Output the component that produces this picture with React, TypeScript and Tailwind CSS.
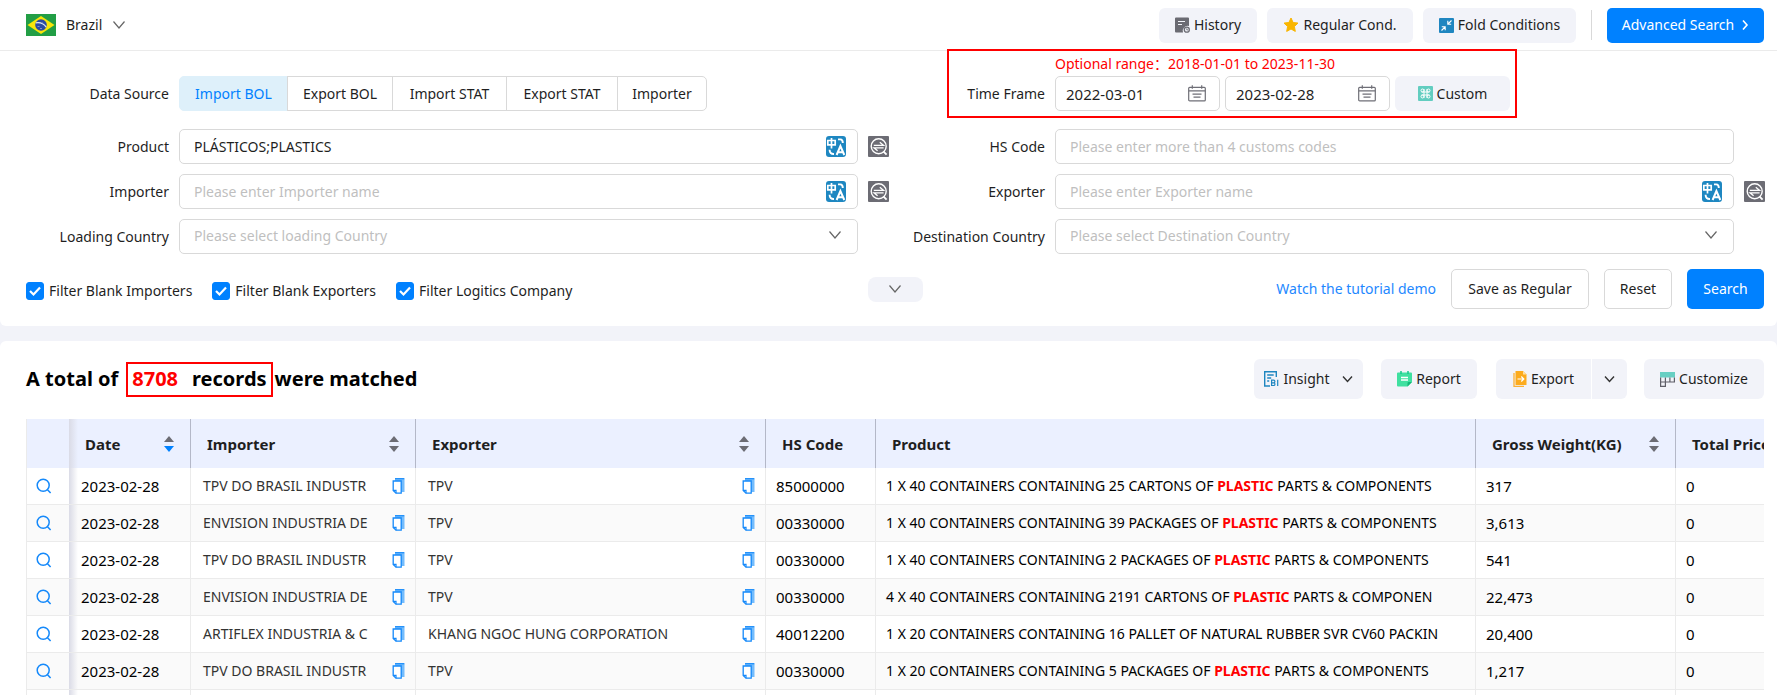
import { useState } from "react";
import type { ReactNode } from "react";

const SOURCES = [
  { name: "Import BOL", width: "w-[109px]" },
  { name: "Export BOL", width: "w-[106px]" },
  { name: "Import STAT", width: "w-[115px]" },
  { name: "Export STAT", width: "w-[112px]" },
  { name: "Importer", width: "w-[90px]" },
];

const FILTERS = ["Filter Blank Importers", "Filter Blank Exporters", "Filter Logitics Company"];

const ROWS = [
  { date: "2023-02-28", importer: "TPV DO BRASIL INDUSTR", exporter: "TPV", hs: "85000000", product: "1 X 40 CONTAINERS CONTAINING 25 CARTONS OF PLASTIC PARTS & COMPONENTS", weight: "317", price: "0" },
  { date: "2023-02-28", importer: "ENVISION INDUSTRIA DE", exporter: "TPV", hs: "00330000", product: "1 X 40 CONTAINERS CONTAINING 39 PACKAGES OF PLASTIC PARTS & COMPONENTS", weight: "3,613", price: "0" },
  { date: "2023-02-28", importer: "TPV DO BRASIL INDUSTR", exporter: "TPV", hs: "00330000", product: "1 X 40 CONTAINERS CONTAINING 2 PACKAGES OF PLASTIC PARTS & COMPONENTS", weight: "541", price: "0" },
  { date: "2023-02-28", importer: "ENVISION INDUSTRIA DE", exporter: "TPV", hs: "00330000", product: "4 X 40 CONTAINERS CONTAINING 2191 CARTONS OF PLASTIC PARTS & COMPONEN", weight: "22,473", price: "0" },
  { date: "2023-02-28", importer: "ARTIFLEX INDUSTRIA & C", exporter: "KHANG NGOC HUNG CORPORATION", hs: "40012200", product: "1 X 20 CONTAINERS CONTAINING 16 PALLET OF NATURAL RUBBER SVR CV60 PACKIN", weight: "20,400", price: "0" },
  { date: "2023-02-28", importer: "TPV DO BRASIL INDUSTR", exporter: "TPV", hs: "00330000", product: "1 X 20 CONTAINERS CONTAINING 5 PACKAGES OF PLASTIC PARTS & COMPONENTS", weight: "1,217", price: "0" },
];

const inputClass =
  "block h-[35px] w-full rounded-[5px] border border-[#d9d9d9] bg-white px-[14px] text-[#1f1f1f] outline-none placeholder:text-[#bfbfbf] focus:border-[#0081ff]";
const softButton = "flex items-center justify-center gap-1 rounded-md bg-[#f2f3f9] hover:bg-[#e8eaf3]";
const pinnedShadow = "bg-linear-to-r from-[#dadbe6] to-transparent to-[9px]";

/* ---------- icons ---------- */

function Flag() {
  return (
    <svg width="30" height="22" viewBox="0 0 30 22" aria-hidden="true">
      <rect width="30" height="22" fill="#229e45" />
      <path d="M15 2l13.500 9L15 20 1.500 11z" fill="#f8e509" />
      <circle cx="15" cy="11" r="5.800" fill="#2b49a3" />
      <path d="M9.800 8.800c4-.6 8 .8 10.400 4.300" stroke="#dfe6f2" strokeWidth="1.200" fill="none" />
      <path d="M11.500 12.500h2M14 14.500h2M16 9h1" stroke="#8fa3d6" strokeWidth=".8" />
    </svg>
  );
}

function Chevron() {
  return (
    <svg width="14" height="10" viewBox="0 0 14 10" fill="none" aria-hidden="true">
      <path d="M1.500 1.500L7 8l5.500-6.500" stroke="#666" strokeWidth="1.200" />
    </svg>
  );
}

function SmallChevron() {
  return (
    <svg width="11" height="8" viewBox="0 0 11 8" fill="none" aria-hidden="true">
      <path d="M1 1.500L5.500 6.500 10 1.500" stroke="#333" strokeWidth="1.400" />
    </svg>
  );
}

function HistoryIcon() {
  return (
    <svg width="15" height="16" viewBox="0 0 15 16" aria-hidden="true">
      <path d="M0 1.500A1 1 0 011 .5h12a1 1 0 011 1V9a5 5 0 00-6 6.500H1a1 1 0 01-1-1z" fill="#6b6b73" />
      <path d="M3 4.500h7M3 7.500h4" stroke="#f2f3f9" strokeWidth="1.200" />
      <circle cx="11.800" cy="12.700" r="2.500" fill="#f2f3f9" stroke="#6b6b73" strokeWidth="1.300" />
      <path d="M11.800 11.300v1.600H13" stroke="#6b6b73" strokeWidth=".9" fill="none" />
    </svg>
  );
}

function StarIcon() {
  return (
    <svg width="16" height="16" viewBox="0 0 16 16" aria-hidden="true">
      <path
        d="M8 1l2.100 4.500 4.900.6-3.600 3.400.9 4.900L8 12l-4.300 2.400.9-4.900L1 6.100l4.900-.6z"
        fill="#f9b500"
        stroke="#f9b500"
        strokeWidth="1"
        strokeLinejoin="round"
      />
    </svg>
  );
}

function FoldIcon() {
  return (
    <svg width="15" height="15" viewBox="0 0 15 15" fill="none" aria-hidden="true">
      <rect width="15" height="15" rx="1" fill="#1f86c0" />
      <path d="M12.500 2.500L9 6M8.800 2.800V6.200h3.400M2.500 12.500L6 9M2.800 8.800h3.400v3.400" stroke="#fff" strokeWidth="1.100" />
    </svg>
  );
}

function TranslateIcon() {
  return (
    <svg width="20" height="21" viewBox="0 0 20 21" fill="none" aria-hidden="true">
      <rect width="20" height="21" rx="3" fill="#1e87c1" />
      <g stroke="#fff">
        <path d="M1.800 4.500h7.400v4.300H1.800zM5.500 2v10.500" strokeWidth="1.700" />
        <path d="M10.600 19L14.400 10l3.900 9M12 16.200h4.900" strokeWidth="2" />
        <path d="M12 3.400h2.300q2.500 0 2.500 3.600M3.600 13.800q0 4.400 4.400 4.200" strokeWidth="1.900" />
      </g>
    </svg>
  );
}

function FuzzyIcon() {
  return (
    <svg width="21" height="21" viewBox="0 0 21 21" fill="none" aria-hidden="true">
      <rect width="21" height="21" rx="1" fill="#6c6c74" />
      <circle cx="10.700" cy="10.300" r="7.500" stroke="#fff" strokeWidth="1.400" />
      <path d="M15.600 15.600l3 3" stroke="#fff" strokeWidth="1.800" />
      <path d="M5.800 9.300h9.700L11.800 6.300M15.600 11.800H6l3.600 3" stroke="#fff" strokeWidth="1.300" />
    </svg>
  );
}

function CalendarIcon() {
  return (
    <svg width="18" height="17" viewBox="0 0 18 17" fill="none" stroke="#6f6f77" aria-hidden="true">
      <rect x=".7" y="2.300" width="16.600" height="13.600" rx="1" strokeWidth="1.200" />
      <path d="M.7 5.800h16.600M4.300.3v3.500M13.700.3v3.500" strokeWidth="1.200" />
      <path d="M4.500 9.200h9M5.500 12.200h7" strokeWidth="1.300" />
    </svg>
  );
}

function CommandIcon() {
  return (
    <svg width="15" height="15" viewBox="0 0 15 15" fill="none" aria-hidden="true">
      <rect width="15" height="15" rx="1" fill="#62cdc0" />
      <g stroke="#fff" strokeWidth="1">
        <path d="M6 3v9M9 3v9M3.500 6h8M3.500 9h8" />
        <circle cx="4.500" cy="4.500" r="1.500" />
        <circle cx="10.500" cy="4.500" r="1.500" />
        <circle cx="4.500" cy="10.500" r="1.500" />
        <circle cx="10.500" cy="10.500" r="1.500" />
      </g>
    </svg>
  );
}

function InsightIcon() {
  return (
    <svg width="15" height="16" viewBox="0 0 15 16" fill="none" stroke="#1f86c0" aria-hidden="true">
      <path d="M6 15H.7V.7h11.600V6" strokeWidth="1.400" />
      <path d="M3.200 4h6.500M3.200 7h4M3.200 10h2" strokeWidth="1.300" />
      <path d="M7.600 9.200v5.300h2a1.300 1.300 0 000-2.700 1.300 1.300 0 000-2.600zM7.600 11.800h2M13.700 8.700V15" strokeWidth="1.200" />
    </svg>
  );
}

function ReportIcon() {
  return (
    <svg width="15" height="16" viewBox="0 0 15 16" aria-hidden="true">
      <path d="M1 1.500h13a1 1 0 011 1V11l-4.500 4.500H1a1 1 0 01-1-1v-12a1 1 0 011-1z" fill="#3fe0a0" />
      <path d="M15 11l-4.500 4.500V12a1 1 0 011-1z" fill="#12b877" />
      <path d="M4 0v3M11 0v3" stroke="#12c98a" strokeWidth="1.500" />
      <path d="M4 6.500h7M4 9h7" stroke="#fff" strokeWidth="1.300" />
    </svg>
  );
}

function ExportIcon() {
  return (
    <svg width="14" height="16" viewBox="0 0 14 16" fill="none" aria-hidden="true">
      <path d="M1 2v13.300h10" stroke="#fbb034" strokeWidth="1.300" />
      <path d="M2.500 0H10l3.500 3.500V14h-11z" fill="#fcab1e" />
      <path d="M10 0l3.500 3.500H10z" fill="#ffe0a3" />
      <path d="M4.500 8h6M8.300 5.500L10.800 8l-2.500 2.500" stroke="#fff" strokeWidth="1.200" />
    </svg>
  );
}

function CustomizeIcon() {
  return (
    <svg width="15" height="15" viewBox="0 0 15 15" fill="none" aria-hidden="true">
      <rect width="15" height="5.500" fill="#67cfc3" />
      <path d="M.6 5.500v8.900h4.800V5.500M.6 10h13.800V5.500M9.900 5.500V10" stroke="#5f5f68" strokeWidth="1.200" />
    </svg>
  );
}

function SearchIcon() {
  return (
    <svg width="16" height="16" viewBox="0 0 16 16" fill="none" stroke="#1589fa" strokeWidth="1.500" aria-hidden="true">
      <circle cx="7.200" cy="7.200" r="6" />
      <path d="M11.300 11.600l3.300 3.400" />
    </svg>
  );
}

function CopyIcon() {
  return (
    <svg width="13" height="16" viewBox="0 0 13 16" fill="none" aria-hidden="true">
      <path d="M3 .5h9.500V14H9V4H3z" fill="#74bcfc" />
      <path d="M3 .7h9.300" stroke="#1589fa" strokeWidth="1.200" />
      <path d="M1.200 3h8v12.200H4L1.200 12.500z" stroke="#1589fa" strokeWidth="1.300" fill="#fff" />
      <path d="M1.200 12.300H4v2.900" stroke="#1589fa" strokeWidth="1.200" />
    </svg>
  );
}

function SortIcon({ desc = false }: { desc?: boolean }) {
  return (
    <svg width="10" height="16" viewBox="0 0 10 16" aria-hidden="true">
      <path d="M5 0l5 6H0z" fill="#6c6c74" />
      <path d="M5 16l5-6H0z" fill={desc ? "#0081ff" : "#6c6c74"} />
    </svg>
  );
}

/* ---------- form pieces ---------- */

function Field({ label, id, action, children }: { label: string; id: string; action?: ReactNode; children: ReactNode }) {
  return (
    <div className="flex items-center gap-[10px]">
      <label htmlFor={id} className="w-[156px] shrink-0 text-right">
        {label}
      </label>
      <div className="relative min-w-0 flex-1">{children}</div>
      <div className="w-[21px] shrink-0">{action}</div>
    </div>
  );
}

function FuzzyButton() {
  return (
    <button className="block" aria-label="Fuzzy search">
      <FuzzyIcon />
    </button>
  );
}

function TextField({ label, id, value, placeholder, translate = false }: { label: string; id: string; value?: string; placeholder?: string; translate?: boolean }) {
  return (
    <Field label={label} id={id} action={translate && <FuzzyButton />}>
      <input id={id} type="text" defaultValue={value} placeholder={placeholder} className={inputClass} />
      {translate && (
        <button className="absolute top-[7px] right-3" aria-label="Translate">
          <TranslateIcon />
        </button>
      )}
    </Field>
  );
}

function SelectField({ label, id, placeholder }: { label: string; id: string; placeholder: string }) {
  return (
    <Field label={label} id={id}>
      <select
        id={id}
        defaultValue=""
        className="block h-[35px] w-full appearance-none rounded-[5px] border border-[#d9d9d9] bg-white px-[14px] pb-[2px] text-[#bfbfbf] outline-none"
      >
        <option value="">{placeholder}</option>
      </select>
      <span className="pointer-events-none absolute top-[11px] right-4">
        <Chevron />
      </span>
    </Field>
  );
}

function DateInput({ id, label, value }: { id: string; label: string; value: string }) {
  return (
    <div className="relative w-[165px]">
      <input
        id={id}
        aria-label={label}
        type="text"
        defaultValue={value}
        className="block h-[35px] w-full rounded-[5px] border border-[#d9d9d9] bg-white px-[10px] text-[15px] text-[#1f1f1f] outline-none"
      />
      <span className="pointer-events-none absolute top-[9px] right-[14px]">
        <CalendarIcon />
      </span>
    </div>
  );
}

/* ---------- table ---------- */

function Product({ text }: { text: string }) {
  return (
    <>
      {text.split(/(PLASTIC)/).map((part, i) =>
        part === "PLASTIC" ? (
          <b key={i} className="text-[#ff0000]">
            {part}
          </b>
        ) : (
          part
        )
      )}
    </>
  );
}

function Th({ children, sort, className = "" }: { children: ReactNode; sort?: "none" | "desc"; className?: string }) {
  return (
    <th className={`border-r border-[#b4b8c8] px-4 text-left text-[15px] font-bold ${className}`}>
      <div className="flex items-center justify-between">
        <span className="whitespace-nowrap">{children}</span>
        {sort && (
          <button aria-label="Sort">
            <SortIcon desc={sort === "desc"} />
          </button>
        )}
      </div>
    </th>
  );
}

function Td({ children, className = "pl-[10px] text-[15px]" }: { children?: ReactNode; className?: string }) {
  return <td className={`overflow-hidden border-r border-b border-[#ebebeb] whitespace-nowrap ${className}`}>{children}</td>;
}

function CompanyTd({ name }: { name?: string }) {
  return (
    <Td className="pr-[10px] pl-3 text-[#333]">
      {name && (
        <div className="flex items-center justify-between">
          {name}
          <button aria-label={`Copy ${name}`}>
            <CopyIcon />
          </button>
        </div>
      )}
    </Td>
  );
}

function ResultTable() {
  return (
    <table className="w-[1850px] table-fixed border-separate border-spacing-0 border-l border-[#ebebeb] text-black">
      <colgroup>
        <col className="w-[42px]" />
        <col className="w-[122px]" />
        <col className="w-[225px]" />
        <col className="w-[350px]" />
        <col className="w-[110px]" />
        <col className="w-[600px]" />
        <col className="w-[200px]" />
        <col className="w-[200px]" />
      </colgroup>
      <thead>
        <tr className="h-[49px] bg-[#ebf0ff] text-[#1f1f1f]">
          <th />
          <Th sort="desc" className={pinnedShadow}>
            Date
          </Th>
          <Th sort="none">Importer</Th>
          <Th sort="none">Exporter</Th>
          <Th>HS Code</Th>
          <Th>Product</Th>
          <Th sort="none">Gross Weight(KG)</Th>
          <Th>Total Price</Th>
        </tr>
      </thead>
      <tbody>
        {ROWS.map((row, i) => (
          <tr key={i} className="h-[37px] bg-white even:bg-[#fafafa]">
            <td className="border-b border-[#ebebeb] pl-[9px]">
              <button className="block" aria-label="View record">
                <SearchIcon />
              </button>
            </td>
            <Td className={`pl-3 text-[15px] ${pinnedShadow}`}>{row.date}</Td>
            <CompanyTd name={row.importer} />
            <CompanyTd name={row.exporter} />
            <Td>{row.hs}</Td>
            <Td className="pl-[10px]">
              <Product text={row.product} />
            </Td>
            <Td>{row.weight}</Td>
            <Td>{row.price}</Td>
          </tr>
        ))}
        {/* next row, still loading */}
        <tr className="h-[37px] bg-white">
          <td />
          <Td className={pinnedShadow} />
          <CompanyTd />
          <CompanyTd />
          <Td />
          <Td />
          <Td />
          <Td />
        </tr>
      </tbody>
    </table>
  );
}

export default function App() {
  const [source, setSource] = useState("Import BOL");
  const [checked, setChecked] = useState<string[]>(FILTERS);

  const toggle = (name: string) =>
    setChecked((list) => (list.includes(name) ? list.filter((n) => n !== name) : [...list, name]));

  return (
    <div className="flex h-screen flex-col overflow-hidden bg-[#f2f3f9] font-['Noto_Sans','Noto_Sans_CJK_SC',sans-serif] text-[14px] leading-5 text-[#1f1f1f]">
      <header className="flex h-[51px] shrink-0 items-center justify-between border-b border-[#ebebeb] bg-white pr-[13px] pl-[26px]">
        <button className="flex items-center gap-[10px]">
          <Flag />
          Brazil
          <Chevron />
        </button>
        <div className="flex items-center gap-[10px]">
          <button className={`${softButton} h-[35px] w-[98px]`}>
            <HistoryIcon />
            History
          </button>
          <button className={`${softButton} h-[35px] w-[146px]`}>
            <StarIcon />
            Regular Cond.
          </button>
          <button className={`${softButton} h-[35px] w-[153px]`}>
            <FoldIcon />
            Fold Conditions
          </button>
          <div className="mx-[5px] h-[30px] w-px bg-[#d9d9d9]" />
          <button className="flex h-[35px] w-[157px] items-center justify-center gap-2 rounded-[5px] bg-[#0081ff] text-white">
            Advanced Search
            <svg width="7" height="10" viewBox="0 0 7 10" fill="none" aria-hidden="true">
              <path d="M1 .5L5 5 1 9.500" stroke="#fff" strokeWidth="1.600" />
            </svg>
          </button>
        </div>
      </header>

      <section className="shrink-0 rounded-b-md bg-white pb-[17px]">
        <div className="grid grid-cols-2 gap-y-[10px] pt-[25px] pr-3 pl-[13px]">
          <div className="mb-2 flex items-center gap-[10px]">
            <span id="source-label" className="w-[156px] text-right">
              Data Source
            </span>
            <div role="group" aria-labelledby="source-label" className="flex">
              {SOURCES.map(({ name, width }) => (
                <button
                  key={name}
                  onClick={() => setSource(name)}
                  className={`-ml-px h-[35px] border first:ml-0 first:rounded-l-[5px] last:rounded-r-[5px] ${width} ${
                    source === name ? "border-[#def0fa] bg-[#def0fa] text-[#0081ff]" : "border-[#d9d9d9] bg-white"
                  }`}
                >
                  {name}
                </button>
              ))}
            </div>
          </div>
          <div className="relative mb-2 flex items-center gap-[10px]">
            <div className="pointer-events-none absolute -top-[27px] left-[58px] h-[69px] w-[570px] border-2 border-[#ff0000]" />
            <p className="absolute -top-[22px] left-[166px] text-[#ff0000]">Optional range：2018-01-01 to 2023-11-30</p>
            <label htmlFor="date-from" className="w-[156px] text-right">
              Time Frame
            </label>
            <div className="flex gap-[5px]">
              <DateInput id="date-from" label="Time Frame from" value="2022-03-01" />
              <DateInput id="date-to" label="Time Frame to" value="2023-02-28" />
              <button className={`${softButton} h-[35px] w-[115px]`}>
                <CommandIcon />
                Custom
              </button>
            </div>
          </div>

          <TextField label="Product" id="product" value="PLÁSTICOS;PLASTICS" translate />
          <TextField label="HS Code" id="hs-code" placeholder="Please enter more than 4 customs codes" />
          <TextField label="Importer" id="importer" placeholder="Please enter Importer name" translate />
          <TextField label="Exporter" id="exporter" placeholder="Please enter Exporter name" translate />
          <SelectField label="Loading Country" id="loading" placeholder="Please select loading Country" />
          <SelectField label="Destination Country" id="destination" placeholder="Please select Destination Country" />
        </div>

        <div className="mt-[15px] grid grid-cols-[1fr_auto_1fr] items-center pr-[13px] pl-[26px]">
          <div className="flex gap-5 pt-1">
            {FILTERS.map((name) => (
              <label key={name} className="flex items-center gap-[5px]">
                <span className="relative size-[18px]">
                  <input
                    type="checkbox"
                    checked={checked.includes(name)}
                    onChange={() => toggle(name)}
                    className="block size-[18px] appearance-none rounded-[3px] border border-[#d9d9d9] checked:border-[#0081ff] checked:bg-[#0081ff]"
                  />
                  <svg className="pointer-events-none absolute inset-0" width="18" height="18" viewBox="0 0 18 18" fill="none" aria-hidden="true">
                    <path d="M4 9l3.500 3.500L14 5.500" stroke="#fff" strokeWidth="2.200" />
                  </svg>
                </span>
                {name}
              </label>
            ))}
          </div>
          <button className="flex h-[25px] w-[55px] items-center justify-center rounded-lg bg-[#f2f3f9]" aria-label="More conditions">
            <Chevron />
          </button>
          <div className="flex items-center justify-end gap-[15px]">
            <a href="#tutorial" className="text-[#1e88ff]">
              Watch the tutorial demo
            </a>
            <button className="h-10 w-[138px] rounded-[5px] border border-[#d9d9d9] bg-white">Save as Regular</button>
            <button className="h-10 w-[68px] rounded-[5px] border border-[#d9d9d9] bg-white">Reset</button>
            <button className="h-10 w-[77px] rounded-[5px] bg-[#0081ff] text-white">Search</button>
          </div>
        </div>
      </section>

      <section className="mt-[15px] flex min-h-0 flex-1 flex-col rounded-t-md bg-white pt-[18px] pr-[13px] pl-[26px]">
        <div className="mb-5 flex shrink-0 items-center justify-between">
          <h1 className="flex items-center text-[20px] font-bold text-black">
            A total of
            <span className="mr-[2px] ml-2 flex h-[35px] items-center gap-[14px] border-2 border-[#ff0000] px-1">
              <span className="text-[#ff0000]">8708</span>
              records
            </span>
            were matched
          </h1>
          <div className="flex items-center">
            <button className={`${softButton} mr-[18px] h-10 w-[109px]`}>
              <InsightIcon />
              Insight
              <span className="ml-2">
                <SmallChevron />
              </span>
            </button>
            <button className={`${softButton} mr-[19px] h-10 w-[96px]`}>
              <ReportIcon />
              Report
            </button>
            <div className="mr-[17px] flex gap-px">
              <button className="flex h-10 w-[95px] items-center justify-center gap-1 rounded-l-md bg-[#f2f3f9]">
                <ExportIcon />
                Export
              </button>
              <button className="flex h-10 w-[35px] items-center justify-center rounded-r-md bg-[#f2f3f9]" aria-label="Export options">
                <SmallChevron />
              </button>
            </div>
            <button className={`${softButton} h-10 w-[120px]`}>
              <CustomizeIcon />
              Customize
            </button>
          </div>
        </div>
        <div className="min-h-0 flex-1 overflow-hidden">
          <ResultTable />
        </div>
      </section>
    </div>
  );
}
